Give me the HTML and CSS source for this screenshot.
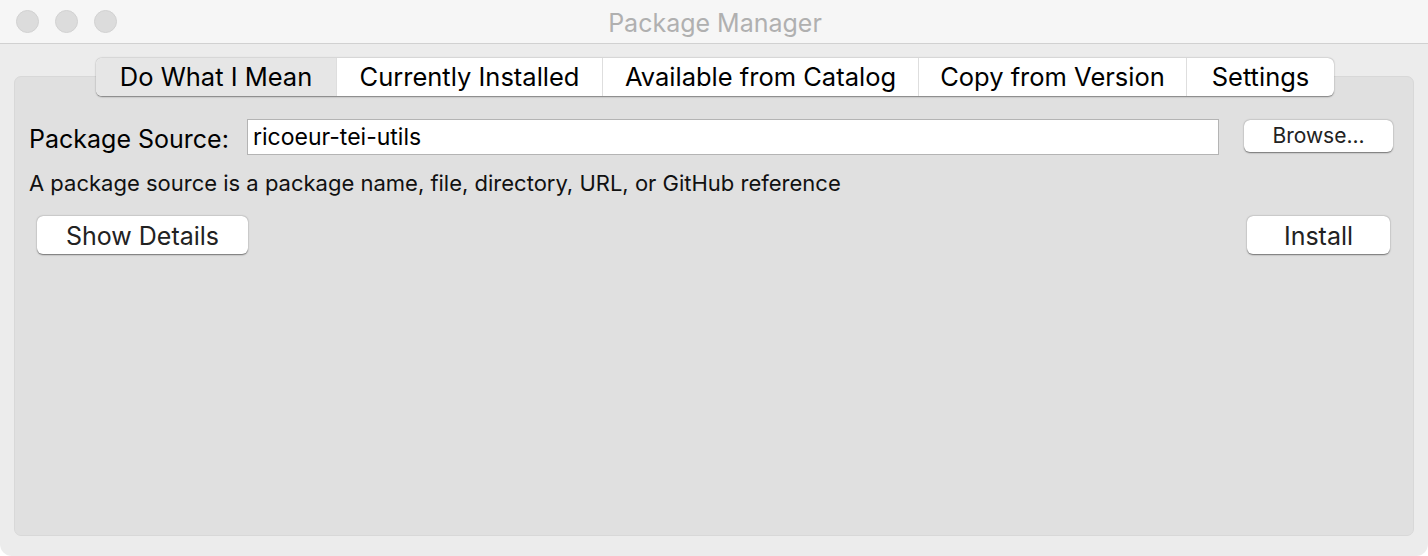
FILE: index.html
```html
<!DOCTYPE html>
<html>
<head>
<meta charset="utf-8">
<link rel="stylesheet" href="styles.css">
</head>
<body>
<div class="window">
  <div class="titlebar">
    <div class="lights"><span class="light"></span><span class="light"></span><span class="light"></span></div>
    <div class="title">Package Manager</div>
  </div>
  <div class="content">
    <div class="tabbox">
      <div class="tabs">
        <div class="tab sel t1">Do What I Mean</div>
        <div class="tab t2">Currently Installed</div>
        <div class="tab t3">Available from Catalog</div>
        <div class="tab t4">Copy from Version</div>
        <div class="tab t5">Settings</div>
      </div>
      <div class="panel">
        <div class="row">
          <label class="label">Package Source:</label>
          <div class="input">ricoeur-tei-utils</div>
          <div class="btn small">Browse...</div>
        </div>
        <div class="help">A package source is a package name, file, directory, URL, or GitHub reference</div>
        <div class="row2">
          <div class="btn big details">Show Details</div>
          <div class="btn big install">Install</div>
        </div>
      </div>
    </div>
  </div>
</div>
</body>
</html>
```
FILE: styles.css
```css
html, body { margin: 0; padding: 0; background: #ffffff; }
body { font-family: Inter, "Liberation Sans", Arial, sans-serif; color: #000; }
.window {
  width: 1428px; height: 556px; box-sizing: border-box;
  background: #ececec; border-radius: 0 0 12px 12px; overflow: hidden;
  display: flex; flex-direction: column;
}
.titlebar {
  height: 43px; flex: none; background: #f6f6f6; border-bottom: 1px solid #d1d1d1;
  display: flex; align-items: center; position: relative;
}
.lights { display: flex; gap: 16px; padding-left: 16px; }
.light { width: 23px; height: 23px; border-radius: 50%; background: #dcdcdc; border: 1px solid #d2d2d2; box-sizing: border-box; }
.title {
  position: absolute; left: 0; right: 0; top: 0; bottom: 0;
  display: flex; align-items: center; justify-content: center;
  font-size: 25px; color: #b0b0b0; padding-left: 2px; padding-top: 2px;
}
.content { flex: 1; padding: 14px 14px 20px 14px; display: flex; }
.tabbox { flex: 1; display: flex; flex-direction: column; position: relative; }
.tabs {
  display: flex; margin-left: 82px; height: 38px; box-sizing: border-box;
  border-radius: 6px; background: #fff; box-shadow: 0 0.5px 1.5px rgba(0,0,0,0.45);
  position: relative; z-index: 2; width: 1238px; overflow: hidden;
}
.tab {
  font-size: 25.5px; display: flex; align-items: center; justify-content: center;
  border-left: 1px solid #dedede; box-sizing: border-box; height: 100%; padding-bottom: 1px;
}
.tab.sel { background: #e6e6e6; border-left: none; }
.t1 { width: 240px; }
.t2 { width: 266px; }
.t3 { width: 316px; }
.t4 { width: 268px; }
.t5 { flex: 1; }
.panel {
  flex: 1; margin-top: -20px; background: #e0e0e0; border: 1px solid #d8d8d8;
  border-radius: 7px; padding: 42px 14px 0 14px; display: flex; flex-direction: column;
}
.row { display: flex; align-items: center; height: 36px; }
.label { font-size: 25px; width: 218px; flex: none; padding-top: 4px; }
.input {
  width: 972px; height: 36px; box-sizing: border-box; background: #fff;
  border: 1px solid #b4b4b4; font-size: 23px; display: flex; align-items: center; padding-left: 5px;
}
.btn {
  background: #fff; border-radius: 6px; box-shadow: 0 0.5px 1.5px rgba(0,0,0,0.5);
  display: flex; align-items: center; justify-content: center; box-sizing: border-box;
}
.btn.small { width: 149px; height: 32px; font-size: 21px; margin-left: 25px; margin-top: -3px; color: #222; }
.help { font-size: 22px; margin-top: 15px; height: 26px; color: #111; }
.row2 { display: flex; justify-content: space-between; margin-top: 20px; padding: 0 9px 0 8px; }
.btn.big { height: 38px; font-size: 25px; color: #222; padding-top: 2px; }
.details { width: 211px; }
.install { width: 143px; }
```
